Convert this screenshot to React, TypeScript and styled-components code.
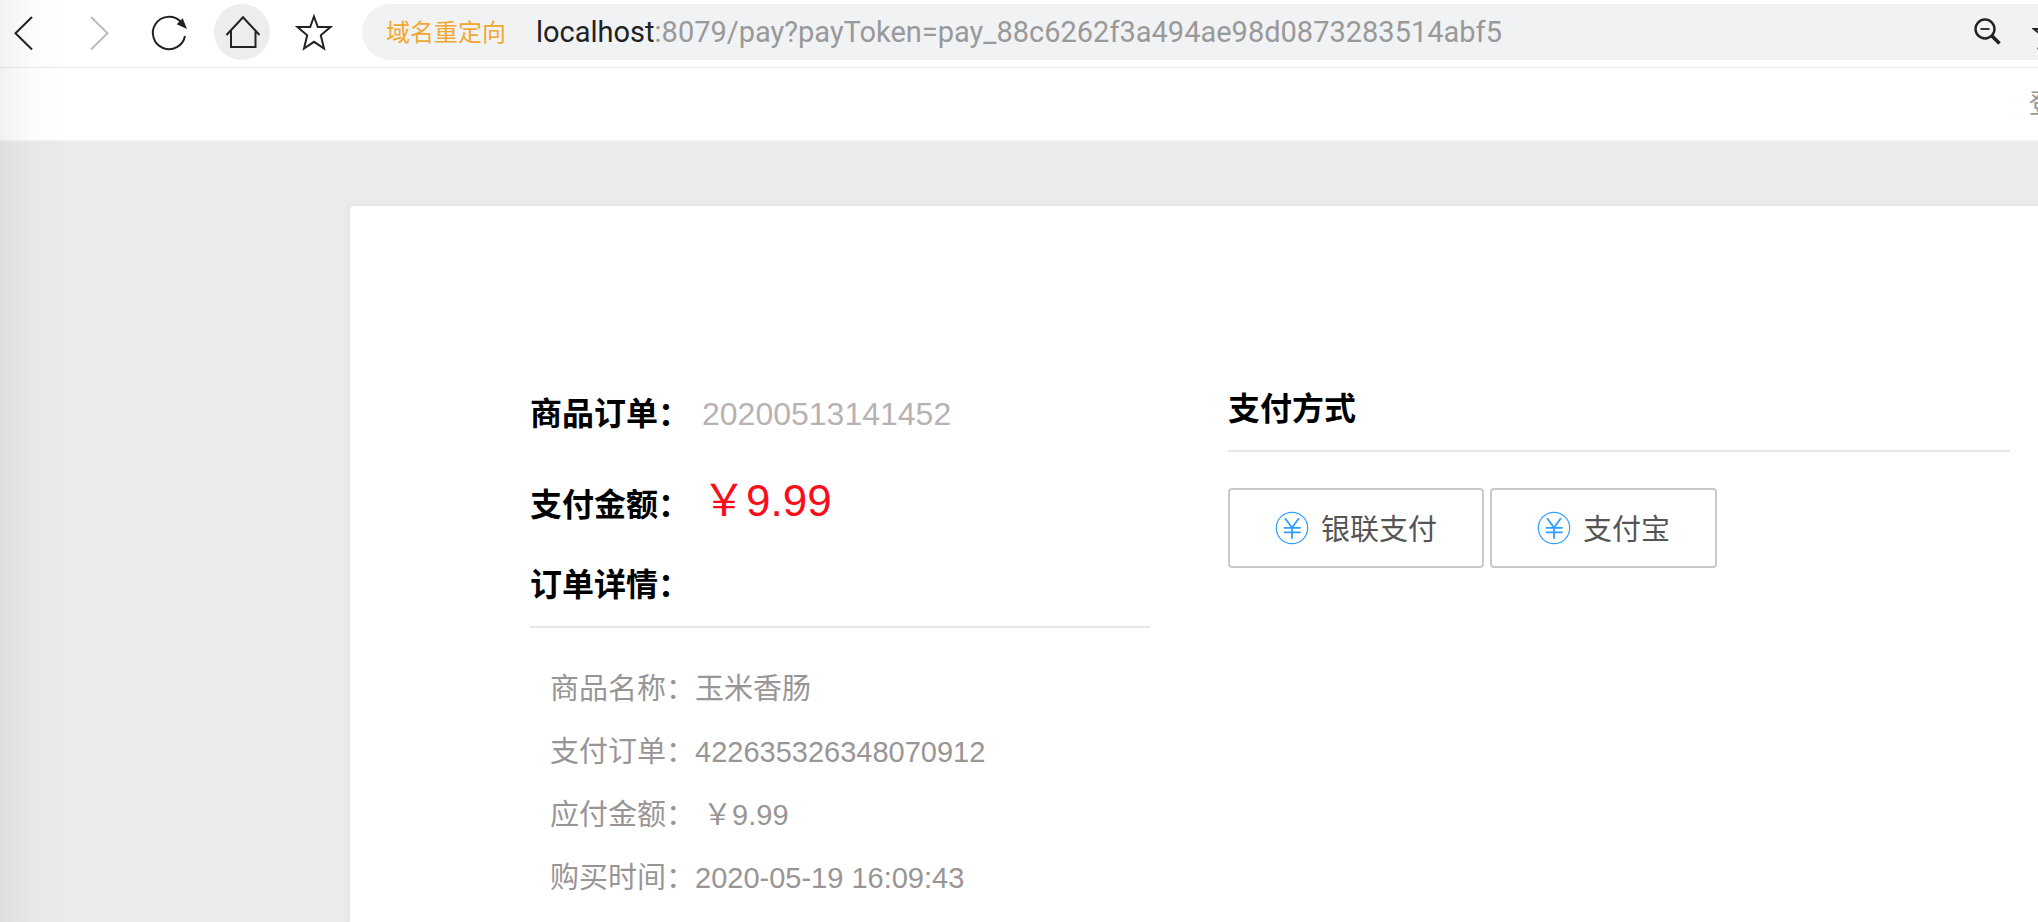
import React from 'react';
import styled, { createGlobalStyle } from 'styled-components';

const GlobalStyle = createGlobalStyle`
  * { box-sizing: border-box; }
  body {
    margin: 0;
    background: #ebebeb;
    font-family: "Liberation Sans", "Noto Sans CJK SC", sans-serif;
    color: #000;
  }
`;

const Page = styled.div`
  position: relative;
  display: flex;
  flex-direction: column;
  min-height: 100vh;
  overflow: hidden;
`;

/* Soft shade that falls over the left edge of the window */
const EdgeShade = styled.div`
  position: absolute;
  inset: 0 auto 0 0;
  width: 68px;
  background: linear-gradient(to right, rgba(0, 0, 0, 0.05), rgba(0, 0, 0, 0.01) 50%, rgba(0, 0, 0, 0));
  pointer-events: none;
`;

const Toolbar = styled.div`
  display: flex;
  gap: 20px;
  padding: 4px 0 7px;
  background: #fff;
  border-bottom: 1px solid #e6e8e9;
`;

const NavButtons = styled.nav`
  display: flex;
  gap: 16px;
  margin-left: -2px;
`;

const NavButton = styled.button<{ $active?: boolean }>`
  width: 56px;
  height: 56px;
  padding: 0;
  border: 0;
  border-radius: 50%;
  background: ${(p) => (p.$active ? '#ededed' : 'transparent')};
  color: #222;

  &:disabled {
    color: #bdbdbd;
  }

  svg {
    display: block;
  }
`;

const AddressBar = styled.div`
  display: flex;
  align-items: center;
  flex: 1;
  min-width: 0;
  height: 56px;
  padding-left: 24px;
  border-radius: 28px 0 0 28px;
  background: #f1f2f4;
`;

const RedirectTag = styled.span`
  flex: none;
  margin-right: 30px;
  padding-top: 2px;
  font-size: 24px;
  line-height: 56px;
  color: #f0a830;
`;

const HostLabel = styled.label`
  flex: none;
  font: 29px/56px Roboto, sans-serif;
  color: #222;
`;

const PathInput = styled.input`
  flex: 1;
  min-width: 0;
  height: 56px;
  padding: 0;
  border: 0;
  outline: 0;
  background: transparent;
  font: 29px/56px Roboto, sans-serif;
  color: #999;
`;

const BarActions = styled.div`
  display: flex;
  flex: none;
  gap: 28px;
  margin-right: -26px;
`;

const BarAction = styled.button`
  width: 32px;
  height: 56px;
  padding: 0;
  border: 0;
  background: transparent;
  color: #222;

  svg {
    display: block;
  }
`;

const SiteHeader = styled.header`
  display: flex;
  align-items: center;
  justify-content: flex-end;
  height: 74px;
  background: #fff;
  border-bottom: 2px solid #f0f0f0;
`;

const LoginLink = styled.a`
  margin-right: -43px;
  font-size: 26px;
  line-height: 40px;
  white-space: nowrap;
  color: #999;
  text-decoration: none;
`;

const Main = styled.main`
  display: flex;
  flex: 1;
  padding: 64px 0 0 350px;
`;

const Card = styled.section`
  display: flex;
  flex: 1;
  gap: 78px;
  min-width: 0;
  padding: 179px 28px 0 180px;
  border-radius: 4px 0 0 0;
  background: #fff;
  box-shadow: 0 0 8px rgba(0, 0, 0, 0.05);
`;

const OrderColumn = styled.div`
  flex: 0 1 620px;
  padding-top: 5px;
`;

const MethodColumn = styled.div`
  flex: 1;
  min-width: 0;
`;

const SummaryRow = styled.div<{ $space: number }>`
  display: flex;
  align-items: baseline;
  gap: 12px;
  height: 48px;
  margin-bottom: ${(p) => p.$space}px;
  line-height: 48px;
`;

const Heading = styled.h2`
  margin: 0;
  font-size: 32px;
  font-weight: 700;
  line-height: 48px;
  white-space: nowrap;
`;

const RuledHeading = styled(Heading)`
  padding-bottom: 17px;
  border-bottom: 2px solid #e6e6e6;
`;

const OrderNumber = styled.span`
  font-size: 32px;
  color: #b8b2b2;
`;

const Price = styled.span`
  font-size: 44px;
  color: #fc0d1b;
`;

const Details = styled.dl`
  margin: 30px 0 0;
  padding-left: 20px;
`;

const DetailRow = styled.div`
  display: flex;
  font-size: 29px;
  line-height: 63px;
  white-space: pre;
  color: #999595;

  dd {
    margin: 0;
  }
`;

const Methods = styled.div`
  display: flex;
  gap: 6px;
  margin-top: 36px;
`;

const MethodButton = styled.button`
  display: flex;
  align-items: center;
  gap: 12px;
  height: 80px;
  padding: 0 45px;
  border: 2px solid #c9c9c9;
  border-radius: 4px;
  background: #fff;
  font-family: inherit;
  font-size: 29px;
  line-height: 40px;
  white-space: nowrap;
  color: #555;
`;

const MethodName = styled.span`
  padding-top: 4px;
`;

const Stroke = ({ children }: { children: React.ReactNode }) => (
  <svg width="56" height="56" viewBox="0 0 56 56" fill="none" stroke="currentColor" strokeWidth="2" aria-hidden="true">
    {children}
  </svg>
);

const YenIcon = () => (
  <svg width="34" height="34" viewBox="0 0 34 34" fill="none" stroke="#2f9fff" aria-hidden="true">
    <circle cx="17" cy="17" r="15.7" strokeWidth="1.2" />
    <path d="M10.5 7.8 17 16.8l6.5-9M17 16.8V27M9.5 16.8h15.5M9.5 21.3h15.5" strokeWidth="1.8" strokeLinecap="round" />
  </svg>
);

const details = [
  ['商品名称：', '玉米香肠'],
  ['支付订单：', '422635326348070912'],
  ['应付金额：', ' ￥9.99'],
  ['购买时间：', '2020-05-19 16:09:43'],
];

const methods = ['银联支付', '支付宝'];

export default function App() {
  return (
    <Page>
      <GlobalStyle />
      <Toolbar>
        <NavButtons>
          <NavButton aria-label="后退">
            <Stroke><path d="M34 13 17.5 29.3 34 45.5" /></Stroke>
          </NavButton>
          <NavButton aria-label="前进" disabled>
            <Stroke><path d="M21 13l16.5 16.3L21 45.5" /></Stroke>
          </NavButton>
          <NavButton aria-label="刷新">
            <Stroke>
              <path d="M43 32A16.2 16.2 0 1 1 38.5 17.5" />
              <path d="M34.7 20.2 40.7 14.2 45 25z" fill="currentColor" stroke="none" />
            </Stroke>
          </NavButton>
          <NavButton aria-label="主页" $active>
            <Stroke><path d="M12.5 31 29 13.2 45.5 31M17 27v16h24.5V27" /></Stroke>
          </NavButton>
          <NavButton aria-label="收藏">
            <Stroke>
              <path d="M28 12.5 31.8 23.1H44.5L34.8 31.3 38 44.5 28 37.8 18 44.5 21.2 31.3 11.5 23.1H24.2z" />
            </Stroke>
          </NavButton>
        </NavButtons>
        <AddressBar>
          <RedirectTag>域名重定向</RedirectTag>
          <HostLabel htmlFor="address">localhost</HostLabel>
          <PathInput id="address" defaultValue=":8079/pay?payToken=pay_88c6262f3a494ae98d0873283514abf5" spellCheck={false} />
          <BarActions>
            <BarAction aria-label="缩小">
              <svg width="32" height="56" viewBox="0 0 32 56" fill="none" stroke="currentColor" aria-hidden="true">
                <circle cx="13" cy="25" r="9.5" strokeWidth="2.4" />
                <path d="M8.5 25h9" strokeWidth="1.8" />
                <path d="M20 32l7.5 7.5" strokeWidth="3.6" />
              </svg>
            </BarAction>
            <BarAction aria-label="添加书签">
              <svg width="32" height="56" viewBox="0 0 32 56" fill="none" stroke="currentColor" strokeWidth="2" aria-hidden="true">
                <path d="M16 13 19.6 25H30L21.5 32 25 43 16 36.5 7 43 10.5 32 2 25H12.4z" />
              </svg>
            </BarAction>
          </BarActions>
        </AddressBar>
      </Toolbar>
      <SiteHeader>
        <LoginLink href="#login">登录</LoginLink>
      </SiteHeader>
      <Main>
        <Card>
          <OrderColumn>
            <SummaryRow $space={39}>
              <Heading>商品订单：</Heading>
              <OrderNumber>20200513141452</OrderNumber>
            </SummaryRow>
            <SummaryRow $space={36}>
              <Heading>支付金额：</Heading>
              <Price>￥9.99</Price>
            </SummaryRow>
            <RuledHeading>订单详情：</RuledHeading>
            <Details>
              {details.map(([label, value]) => (
                <DetailRow key={label}>
                  <dt>{label}</dt>
                  <dd>{value}</dd>
                </DetailRow>
              ))}
            </Details>
          </OrderColumn>
          <MethodColumn>
            <RuledHeading>支付方式</RuledHeading>
            <Methods>
              {methods.map((name) => (
                <MethodButton key={name} type="button">
                  <YenIcon />
                  <MethodName>{name}</MethodName>
                </MethodButton>
              ))}
            </Methods>
          </MethodColumn>
        </Card>
      </Main>
      <EdgeShade />
    </Page>
  );
}
